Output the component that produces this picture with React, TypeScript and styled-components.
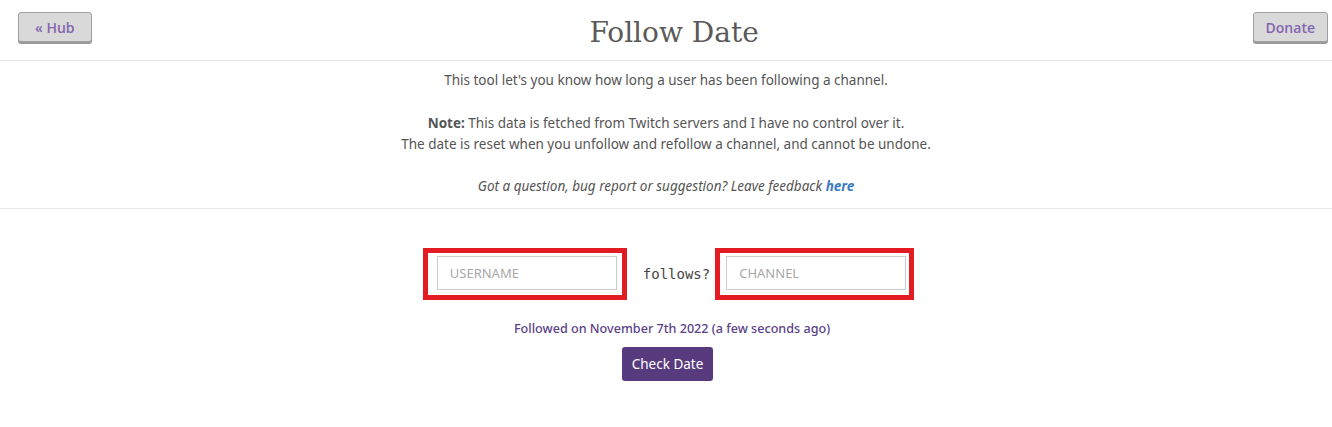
import styled, { createGlobalStyle } from 'styled-components';

const GlobalStyle = createGlobalStyle`
  html, body {
    margin: 0;
    padding: 0;
    background: #fff;
    font-family: 'Noto Sans', 'Open Sans', sans-serif;
    color: #555;
  }
`;

function App() {
  return (
    <Page>
      <GlobalStyle />
      <Header>
        <NavButton $pad={16}>« Hub</NavButton>
        <Title>Follow Date</Title>
        <NavButton $pad={12}>Donate</NavButton>
      </Header>
      <Intro>
        <Line>This tool let's you know how long a user has been following a channel.</Line>
        <Spacer />
        <Line>
          <b>Note:</b> This data is fetched from Twitch servers and I have no control over it.
        </Line>
        <Line>The date is reset when you unfollow and refollow a channel, and cannot be undone.</Line>
        <Spacer />
        <Line>
          <i>
            Got a question, bug report or suggestion? Leave feedback <FeedbackLink href="#">here</FeedbackLink>
          </i>
        </Line>
      </Intro>
      <Form>
        <InputRow>
          <Highlight $left={9} $right={5}>
            <TextInput placeholder="USERNAME" />
          </Highlight>
          <Follows>follows?</Follows>
          <Highlight $left={6} $right={3}>
            <TextInput placeholder="CHANNEL" />
          </Highlight>
        </InputRow>
        <Result>Followed on November 7th 2022 (a few seconds ago)</Result>
        <CheckButton>Check Date</CheckButton>
      </Form>
    </Page>
  );
}

const Page = styled.div`
  width: 1332px;
  min-height: 427px;
`;

const Header = styled.div`
  display: flex;
  align-items: flex-start;
  justify-content: space-between;
  padding: 12px 4px 0 18px;
  height: 48px;
  border-bottom: 1px solid #e6e6e6;
`;

const NavButton = styled.button<{ $pad: number }>`
  height: 30px;
  padding: 0 ${({ $pad }) => $pad}px;
  background: #d9d9d9;
  border: 1px solid #a0a0a0;
  border-radius: 3px;
  box-shadow: 0 2px 0 #9a9a9a;
  color: #8466b0;
  font-family: 'Open Sans', 'Noto Sans', sans-serif;
  font-size: 14px;
  font-weight: 600;
  cursor: pointer;
`;

const Title = styled.h1`
  margin: 4px 0 0 4px;
  font-family: 'DejaVu Serif', serif;
  font-weight: normal;
  font-size: 28px;
  color: #5a5a5a;
`;

const Intro = styled.div`
  padding: 9px 0 10px;
  text-align: center;
  font-size: 13.5px;
  line-height: 21.3px;
  border-bottom: 1px solid #e6e6e6;
  color: #555;
`;

const Line = styled.div``;

const Spacer = styled.div`
  height: 21.3px;
`;

const FeedbackLink = styled.a`
  color: #3a7bc2;
  font-weight: bold;
  text-decoration: none;
`;

const Form = styled.div`
  display: flex;
  flex-direction: column;
  align-items: center;
  padding-top: 39px;
`;

const InputRow = styled.div`
  display: flex;
  align-items: center;
  margin-left: 5px;
`;

const Highlight = styled.div<{ $left: number; $right: number }>`
  border: 5px solid #e31b23;
  padding: 3px ${({ $right }) => $right}px 5px ${({ $left }) => $left}px;
`;

const TextInput = styled.input`
  box-sizing: border-box;
  width: 180px;
  height: 34px;
  border: 1px solid #ccc;
  padding: 0 12px;
  font-family: 'Noto Sans', 'Open Sans', sans-serif;
  font-size: 13px;
  color: #555;
  outline: none;
  &::placeholder {
    color: #a8a8a8;
  }
`;

const Follows = styled.span`
  padding: 0 5px 0 16px;
  font-family: 'DejaVu Sans Mono', monospace;
  font-size: 14px;
  color: #444;
`;

const Result = styled.div`
  margin: 20px 0 0 12px;
  font-size: 12.6px;
  font-weight: 500;
  color: #5b3f87;
`;

const CheckButton = styled.button`
  margin: 10px 0 0 3px;
  height: 34px;
  padding: 0 10px;
  background: #583b7e;
  border: none;
  border-radius: 3px;
  color: #fff;
  font-family: 'Noto Sans', 'Open Sans', sans-serif;
  font-size: 13.5px;
  cursor: pointer;
`;

export default App;
